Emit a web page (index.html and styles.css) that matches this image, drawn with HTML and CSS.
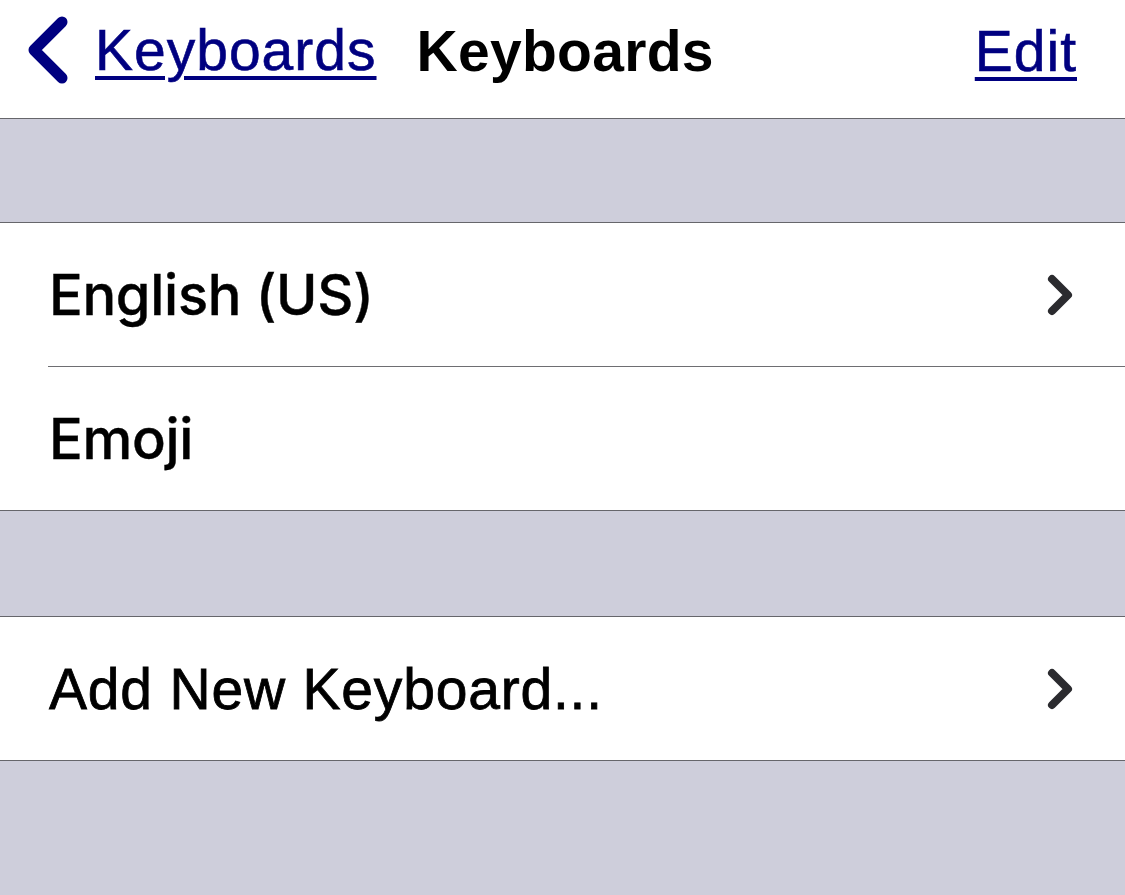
FILE: index.html
```html
<!DOCTYPE html>
<html>
<head>
<meta charset="utf-8">
<link rel="stylesheet" href="styles.css">
</head>
<body>
<div class="screen">
  <header class="navbar">
    <a class="back" href="#">
      <svg class="back-icon" width="44" height="68" viewBox="0 0 44 68"><path d="M36 6 L8 34 L36 62" fill="none" stroke="#000080" stroke-width="11" stroke-linecap="round" stroke-linejoin="round"/></svg>
      <span class="link">Keyboards</span>
    </a>
    <h1 class="title">Keyboards</h1>
    <a class="link edit" href="#">Edit</a>
  </header>
  <div class="spacer top"></div>
  <ul class="group">
    <li class="row"><span class="label inter">English (US)</span><svg class="chev" width="28" height="42" viewBox="0 0 28 42"><path d="M6 5 L22 21 L6 37" fill="none" stroke="#2b2b2f" stroke-width="8" stroke-linecap="round" stroke-linejoin="round"/></svg></li>
    <li class="row"><span class="label inter">Emoji</span></li>
  </ul>
  <div class="spacer mid"></div>
  <ul class="group">
    <li class="row"><span class="label arial">Add New Keyboard...</span><svg class="chev" width="28" height="42" viewBox="0 0 28 42"><path d="M6 5 L22 21 L6 37" fill="none" stroke="#2b2b2f" stroke-width="8" stroke-linecap="round" stroke-linejoin="round"/></svg></li>
  </ul>
  <div class="spacer bottom"></div>
</div>
</body>
</html>
```

FILE: styles.css
```css
html, body {
  margin: 0;
  padding: 0;
  background: #cecedb;
}
.screen {
  width: 1125px;
  height: 895px;
  display: flex;
  flex-direction: column;
  background: #cecedb;
  font-family: "Liberation Sans", Arial, sans-serif;
}
.navbar {
  height: 118px;
  background: #ffffff;
  border-bottom: 1px solid #66666b;
  display: flex;
  align-items: center;
  padding: 0 48px 0 26px;
  box-sizing: content-box;
}
.back {
  display: flex;
  align-items: center;
  gap: 25px;
  text-decoration: none;
  margin-top: -18px;
}
.back-icon {
  display: block;
  margin-top: 0;
}
.link {
  color: #000080;
  text-decoration: underline;
  text-decoration-thickness: 4px;
  text-underline-offset: 6px;
  font-size: 57px;
  letter-spacing: 1px;
  -webkit-text-stroke: 0.6px #000080;
  font-family: "Liberation Sans", Arial, sans-serif;
}
.title {
  margin: -16px 0 0 40px;
  font-size: 57px;
  font-weight: bold;
  color: #000;
  letter-spacing: 0.3px;
}
.edit {
  margin-left: auto;
  margin-top: -16px;
}
.spacer.top { height: 103px; }
.spacer.mid { height: 105px; }
.spacer.bottom { flex: 1; }
.group {
  list-style: none;
  margin: 0;
  padding: 0 0 0 48px;
  background: #ffffff;
  border-top: 1px solid #66666b;
  border-bottom: 1px solid #66666b;
}
.row {
  height: 143px;
  display: flex;
  align-items: center;
  padding-right: 51px;
  border-bottom: 1px solid #6e6e72;
}
.row:last-child {
  border-bottom: none;
}
.label {
  padding-left: 1px;
  color: #000;
}
.inter {
  font-family: Inter, "Noto Sans", sans-serif;
  font-weight: 500;
  font-size: 56px;
  letter-spacing: -0.3px;
  -webkit-text-stroke: 0.4px #000;
}
.arial {
  font-family: "Liberation Sans", Arial, sans-serif;
  font-size: 57px;
  letter-spacing: 0.8px;
  -webkit-text-stroke: 0.8px #000;
}
.chev {
  margin-left: auto;
  display: block;
}
```
